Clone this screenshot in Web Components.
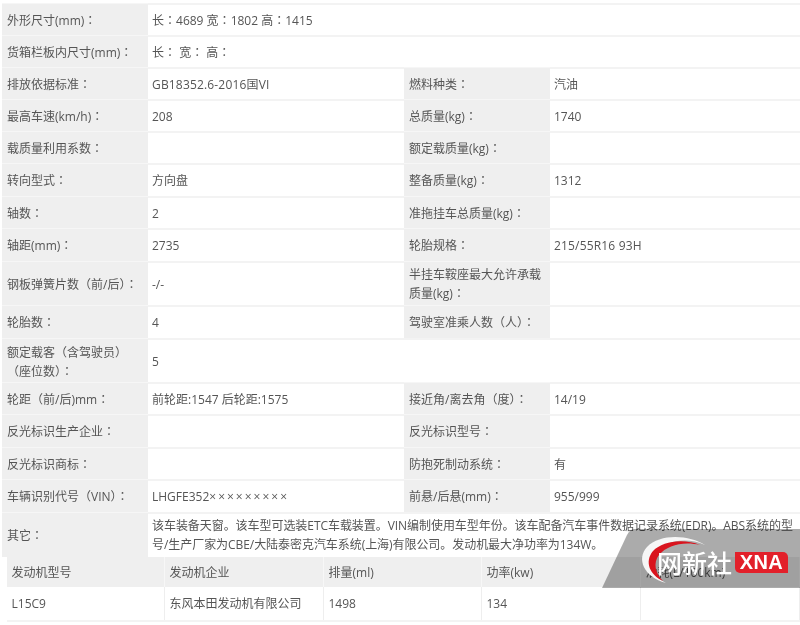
<!DOCTYPE html>
<html><head><meta charset="utf-8">
<style>
html,body{margin:0;padding:0;background:#fff}
body{width:800px;height:625px;overflow:hidden;position:relative;font:12px/18px "Open Sans","Noto Sans CJK SC",sans-serif;color:#555}
i{font-style:normal;font-family:"Noto Sans CJK TC",sans-serif}
.x{letter-spacing:2px}
.w{letter-spacing:.17px}
.n{letter-spacing:-.055px;white-space:nowrap}
</style></head><body>
<spec-table>
<spec-row style="--h:32px"><spec-label>外形尺寸(mm)<i>：</i></spec-label><spec-value wide>长<i>：</i>4689 宽<i>：</i>1802 高<i>：</i>1415</spec-value></spec-row>
<spec-row style="--h:32px"><spec-label>货箱栏板内尺寸(mm)<i>：</i></spec-label><spec-value wide>长<i>：</i> 宽<i>：</i> 高<i>：</i></spec-value></spec-row>
<spec-row style="--h:32px"><spec-label>排放依据标准<i>：</i></spec-label><spec-value><span class="w">GB18352.6-2016国VI</span></spec-value><spec-label>燃料种类<i>：</i></spec-label><spec-value>汽油</spec-value></spec-row>
<spec-row style="--h:32px"><spec-label>最高车速(km/h)<i>：</i></spec-label><spec-value>208</spec-value><spec-label>总质量(kg)<i>：</i></spec-label><spec-value>1740</spec-value></spec-row>
<spec-row style="--h:32px"><spec-label>载质量利用系数<i>：</i></spec-label><spec-value></spec-value><spec-label>额定载质量(kg)<i>：</i></spec-label><spec-value></spec-value></spec-row>
<spec-row style="--h:33px"><spec-label>转向型式<i>：</i></spec-label><spec-value>方向盘</spec-value><spec-label>整备质量(kg)<i>：</i></spec-label><spec-value>1312</spec-value></spec-row>
<spec-row style="--h:32px"><spec-label>轴数<i>：</i></spec-label><spec-value>2</spec-value><spec-label>准拖挂车总质量(kg)<i>：</i></spec-label><spec-value></spec-value></spec-row>
<spec-row style="--h:33px"><spec-label>轴距(mm)<i>：</i></spec-label><spec-value>2735</spec-value><spec-label>轮胎规格<i>：</i></spec-label><spec-value><span class="w">215/55R16 93H</span></spec-value></spec-row>
<spec-row style="--h:44px"><spec-label>钢板弹簧片数（前/后）<i>：</i></spec-label><spec-value>-/-</spec-value><spec-label>半挂车鞍座最大允许承载质量(kg)<i>：</i></spec-label><spec-value></spec-value></spec-row>
<spec-row style="--h:33px"><spec-label>轮胎数<i>：</i></spec-label><spec-value>4</spec-value><spec-label>驾驶室准乘人数（人）<i>：</i></spec-label><spec-value></spec-value></spec-row>
<spec-row style="--h:44px"><spec-label style="padding-top:4px">额定载客（含驾驶员）（座位数）<i>：</i></spec-label><spec-value wide>5</spec-value></spec-row>
<spec-row style="--h:32px"><spec-label>轮距（前/后)mm<i>：</i></spec-label><spec-value>前轮距:1547 后轮距:1575</spec-value><spec-label>接近角/离去角（度）<i>：</i></spec-label><spec-value>14/19</spec-value></spec-row>
<spec-row style="--h:33px"><spec-label>反光标识生产企业<i>：</i></spec-label><spec-value></spec-value><spec-label>反光标识型号<i>：</i></spec-label><spec-value></spec-value></spec-row>
<spec-row style="--h:32px"><spec-label>反光标识商标<i>：</i></spec-label><spec-value></spec-value><spec-label>防抱死制动系统<i>：</i></spec-label><spec-value>有</spec-value></spec-row>
<spec-row style="--h:33px"><spec-label>车辆识别代号（VIN）<i>：</i></spec-label><spec-value>LHGFE352<span class="x">×××××××××</span></spec-value><spec-label>前悬/后悬(mm)<i>：</i></spec-label><spec-value>955/999</spec-value></spec-row>
<spec-row style="--h:45px"><spec-label>其它<i>：</i></spec-label><spec-value wide note><span class="n">该车装备天窗。该车型可选装ETC车载装置。VIN编制使用车型年份。该车配备汽车事件数据记录系统(EDR)。ABS系统的型<br>号/生产厂家为CBE/大陆泰密克汽车系统(上海)有限公司。发动机最大净功率为134W。</span></spec-value></spec-row>
</spec-table>
<engine-table>
<engine-cell head>发动机型号</engine-cell><engine-cell head>发动机企业</engine-cell><engine-cell head>排量(ml)</engine-cell><engine-cell head>功率(kw)</engine-cell><engine-cell head>油耗(L/100km)</engine-cell>
<engine-cell>L15C9</engine-cell><engine-cell>东风本田发动机有限公司</engine-cell><engine-cell>1498</engine-cell><engine-cell>134</engine-cell><engine-cell></engine-cell>
</engine-table>
<xna-mark></xna-mark>
<script>
function def(name, css, html){
  customElements.define(name, class extends HTMLElement{
    connectedCallback(){
      if(this.shadowRoot) return;
      this.attachShadow({mode:'open'}).innerHTML='<style>'+css+'</style>'+html;
    }
  });
}
def('spec-table',':host{display:block;padding:3px 0 0 2px;filter:blur(.4px)}','<slot></slot>');
def('spec-row',':host{display:grid;grid-template-columns:146px 256px 146px 1fr;height:var(--h);box-sizing:border-box;border-top:2px solid #f3f3f3}','<slot></slot>');
def('spec-label',':host{display:flex;align-items:center;box-sizing:border-box;background:#efefef;padding:1px 4px 0 5px;margin-top:-2px;color:#555;line-height:18px;border-top:1px solid #f6f6f6}','<span><slot></slot></span>');
def('spec-value',':host{display:flex;align-items:center;padding:0 4px;color:#555;line-height:19px}:host([wide]){grid-column:2 / -1}:host([note]){padding-bottom:1px}','<span><slot></slot></span>');
def('engine-table',':host{display:grid;grid-template-columns:158px 159px 158px 159px 159px;grid-template-rows:30px 33px;margin-left:7px;width:793px;border-bottom:2px solid #f3f3f3;filter:blur(.4px)}','<slot></slot>');
def('engine-cell',`:host{display:flex;align-items:center;padding:1px 4px 0 4.5px;border-right:1px solid #eee;color:#555;box-sizing:border-box}
:host([head]){background:#efefef;border-right:1px solid #f7f7f7;padding-top:2px}`,'<span><slot></slot></span>');
def('xna-mark',`:host{position:absolute;left:600px;top:527px;width:200px;height:62px;display:block;font-family:"Noto Sans CJK SC","Noto Sans",sans-serif;filter:blur(.4px)}
svg{position:absolute;inset:0}
.t{position:absolute;left:57px;top:15px;font-size:25px;font-weight:500;line-height:40px;color:#fff;white-space:nowrap}
.x{position:absolute;left:135px;top:25px;width:53px;height:21px;border-radius:0 5px 0 5px;background:#e2202a;color:#fff;font:bold 20px/21px "Liberation Sans",sans-serif;text-align:center;letter-spacing:.4px}`,
`<svg width="200" height="62" viewBox="0 0 200 62">
<path d="M34 2H200V61H2L27 8Q30 2 34 2Z" fill="#000" fill-opacity=".33"/>
<path d="M105 18C90 8 60 6 47 20C36 32 44 50 66 56C54 50 49 36 55 26C64 13 88 10 105 18Z" fill="#f6f6f6"/>
<path d="M100 18C84 11 62 14 53 24C44 35 50 48 63 54C55 46 53 36 59 28C67 18 84 14 100 18Z" fill="#d9141e"/>
</svg><div class="t">网新社</div><div class="x">XNA</div>`);
</script>
</body></html>
